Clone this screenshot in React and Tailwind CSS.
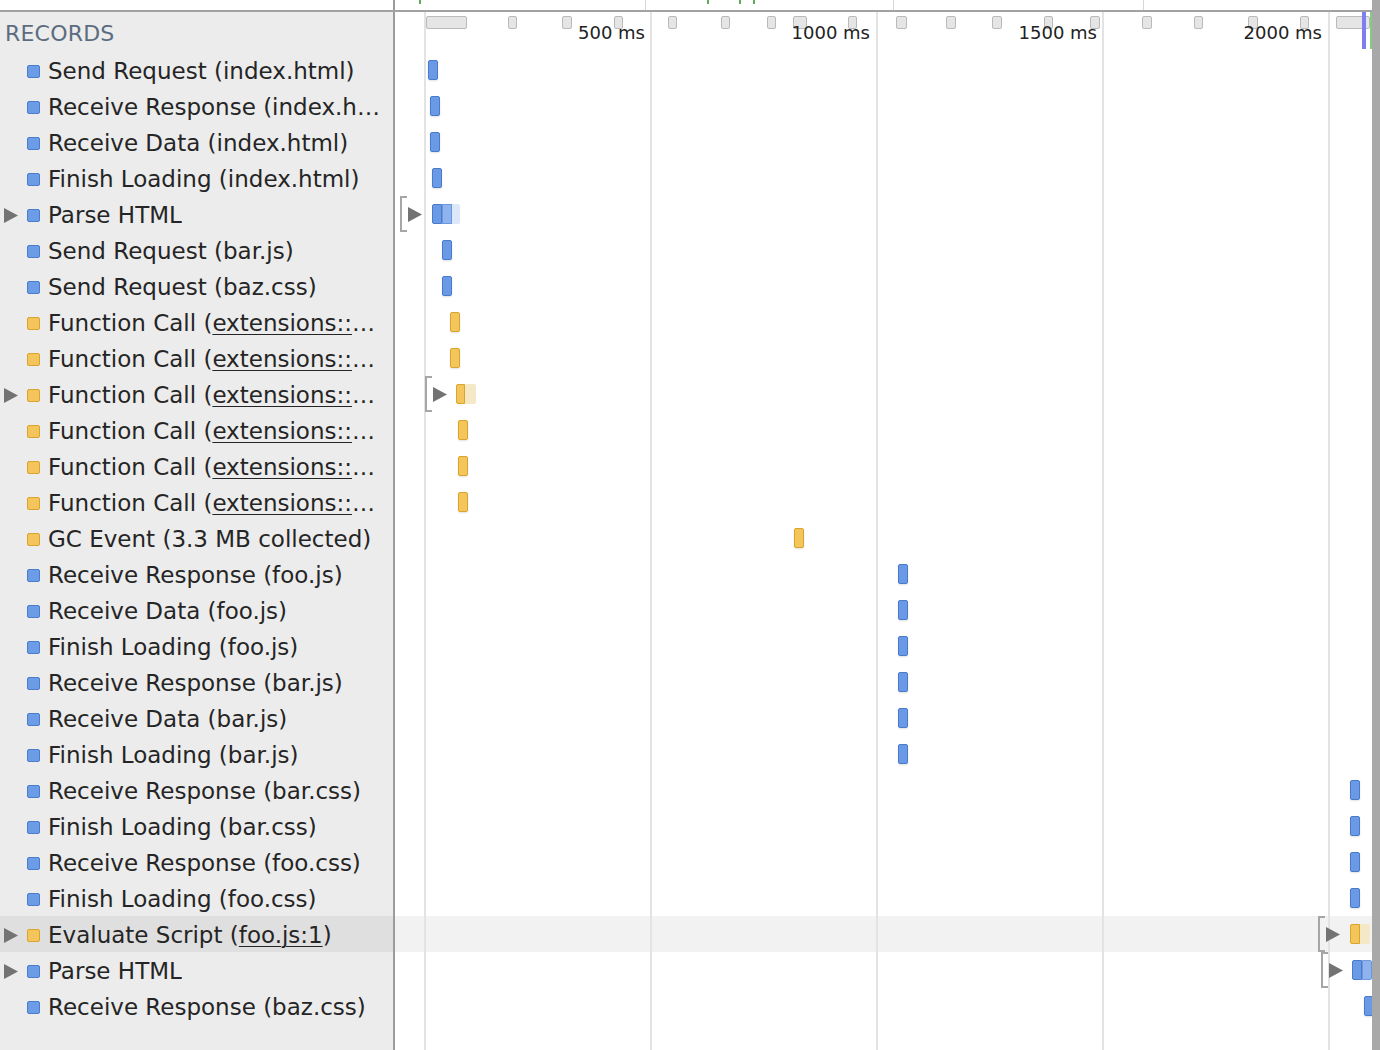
import React from 'react';

const B = 'blue';
const O = 'orange';

const rows = [
  { name: 'Send Request', arg: 'index.html', k: B, x: 428 },
  { name: 'Receive Response', arg: 'index.html', k: B, x: 430 },
  { name: 'Receive Data', arg: 'index.html', k: B, x: 430 },
  { name: 'Finish Loading', arg: 'index.html', k: B, x: 432 },
  { name: 'Parse HTML', k: B, x: 432, expand: 400, parts: [['solid', 10], ['mid', 10], ['pale', 8]] },
  { name: 'Send Request', arg: 'bar.js', k: B, x: 442 },
  { name: 'Send Request', arg: 'baz.css', k: B, x: 442 },
  { name: 'Function Call', link: 'extensions::binding:251', k: O, x: 450 },
  { name: 'Function Call', link: 'extensions::binding:251', k: O, x: 450 },
  { name: 'Function Call', link: 'extensions::event:101', k: O, x: 456, expand: 425, parts: [['solid', 9], ['pale', 11]] },
  { name: 'Function Call', link: 'extensions::utils:26', k: O, x: 458 },
  { name: 'Function Call', link: 'extensions::utils:26', k: O, x: 458 },
  { name: 'Function Call', link: 'extensions::utils:26', k: O, x: 458 },
  { name: 'GC Event', arg: '3.3 MB collected', k: O, x: 794 },
  { name: 'Receive Response', arg: 'foo.js', k: B, x: 898 },
  { name: 'Receive Data', arg: 'foo.js', k: B, x: 898 },
  { name: 'Finish Loading', arg: 'foo.js', k: B, x: 898 },
  { name: 'Receive Response', arg: 'bar.js', k: B, x: 898 },
  { name: 'Receive Data', arg: 'bar.js', k: B, x: 898 },
  { name: 'Finish Loading', arg: 'bar.js', k: B, x: 898 },
  { name: 'Receive Response', arg: 'bar.css', k: B, x: 1350 },
  { name: 'Finish Loading', arg: 'bar.css', k: B, x: 1350 },
  { name: 'Receive Response', arg: 'foo.css', k: B, x: 1350 },
  { name: 'Finish Loading', arg: 'foo.css', k: B, x: 1350 },
  { name: 'Evaluate Script', link: 'foo.js:1', k: O, x: 1350, expand: 1318, parts: [['solid', 10], ['pale', 10]], selected: true },
  { name: 'Parse HTML', k: B, x: 1352, expand: 1321, parts: [['solid', 10], ['mid', 10]] },
  { name: 'Receive Response', arg: 'baz.css', k: B, x: 1364 },
];

// header frame boxes: [left, width] relative to the timeline
const boxes = [
  [31, 41], [113, 9], [167, 10], [219, 9], [273, 9], [326, 9], [372, 9], [398, 14],
  [453, 9], [501, 11], [551, 10], [597, 10], [649, 9], [695, 10], [747, 10], [799, 9],
  [853, 10], [905, 9], [941, 34],
];

const labels = [
  ['500 ms', 'left-[50px]'],
  ['1000 ms', 'left-[275px]'],
  ['1500 ms', 'left-[502px]'],
  ['2000 ms', 'left-[727px]'],
];

const segClass = {
  blue: {
    solid: 'bg-[#6a9ae6] border border-[#4a7bcb]',
    mid: 'bg-[#8fb3ee] border border-[#6b97dc]',
    pale: 'bg-[#dce7f8]',
  },
  orange: {
    solid: 'bg-[#f4c55a] border border-[#d9a52c]',
    mid: 'bg-[#f6d588] border border-[#e0b650]',
    pale: 'bg-[#f5e8c6]',
  },
};

const Square = ({ k }) => (
  <span
    className={`w-[13px] h-[13px] rounded-[2px] shrink-0 border ${
      k === B ? 'bg-[#6c9ce6] border-[#4b7dcc]' : 'bg-[#f4c55a] border-[#d8a42c]'
    }`}
  />
);

const Triangle = () => (
  <svg width="14" height="15" viewBox="0 0 14 15">
    <polygon points="0,0 14,7.5 0,15" fill="#737373" />
  </svg>
);

const Label = ({ row }) => (
  <span className="truncate">
    {row.name}
    {row.arg && ` (${row.arg})`}
    {row.link && (
      <>
        {' ('}
        <span className="underline decoration-1 underline-offset-[3px]">{row.link}</span>
        {')'}
      </>
    )}
  </span>
);

// a record's bar on the time canvas; grouped records get a bracket and a disclosure arrow
const Bar = ({ row }) => {
  const left = row.x - 395;
  if (!row.parts) {
    return (
      <div
        className={`absolute top-[8px] h-[20px] w-[10px] rounded-[2px] z-[2] shadow-[0_1px_2px_rgba(0,0,0,0.12)] ${segClass[row.k].solid}`}
        style={{ left }}
      />
    );
  }
  return (
    <>
      <div className="absolute top-0 h-[36px] flex items-center z-[2]" style={{ left: row.expand - 395 }}>
        <div className="w-[7px] h-full border-l-2 border-y-2 border-[#a6a6a6]" />
        <div className="ml-[1px]">
          <Triangle />
        </div>
      </div>
      <div className="absolute top-[8px] h-[20px] flex z-[2]" style={{ left }}>
        {row.parts.map(([p, w], i) => (
          <div
            key={i}
            className={`h-full ${i === 0 ? 'rounded-l-[2px]' : ''} ${i === row.parts.length - 1 ? 'rounded-r-[2px]' : ''} ${segClass[row.k][p]}`}
            style={{ width: w }}
          />
        ))}
      </div>
    </>
  );
};

export default function App() {
  return (
    <div className="w-[1380px] h-[1050px] flex overflow-hidden bg-white font-['DejaVu_Sans',sans-serif] text-[#252525]">
      <div className="w-[1372px] flex flex-col">
        {/* overview strip */}
        <div className="h-[10px] flex shrink-0">
          <div className="w-[395px] border-r-2 border-[#9c9c9c]" />
          <div className="relative flex-1">
            <div className="absolute left-[24px] top-0 w-[2px] h-[4px] bg-[#5cae5c]" />
            <div className="absolute left-[312px] top-0 w-[2px] h-[4px] bg-[#5cae5c]" />
            <div className="absolute left-[344px] top-0 w-[2px] h-[4px] bg-[#5cae5c]" />
            <div className="absolute left-[358px] top-0 w-[2px] h-[4px] bg-[#5cae5c]" />
            <div className="absolute left-[250px] top-0 w-[1px] h-full bg-[#d6d6d6]" />
            <div className="absolute left-[498px] top-0 w-[1px] h-full bg-[#d6d6d6]" />
            <div className="absolute left-[748px] top-0 w-[1px] h-full bg-[#d6d6d6]" />
          </div>
        </div>
        <div className="h-[2px] bg-[#a2a2a2] shrink-0" />

        <div className="flex-1 flex min-h-0">
          {/* records list */}
          <div className="w-[395px] shrink-0 bg-[#ececec] border-r-2 border-[#9c9c9c] flex flex-col">
            <div className="h-[40px] flex items-center pl-[5px] pt-[2px] text-[22px] text-[#5c6c80] tracking-[0.2px]">
              RECORDS
            </div>
            {rows.map((row, i) => (
              <div
                key={i}
                className={`h-[36px] flex items-center text-[23px] pt-[2px] pr-[6px] ${row.selected ? 'bg-[#dfdfdf]' : ''}`}
              >
                <div className="w-[27px] shrink-0 pl-[4px] flex items-center">
                  {row.expand && <Triangle />}
                </div>
                <Square k={row.k} />
                <div className="ml-[8px] min-w-0 flex-1 flex leading-[34px]">
                  <Label row={row} />
                </div>
              </div>
            ))}
          </div>

          {/* timeline */}
          <div className="relative flex-1 flex flex-col overflow-hidden">
            <div className="absolute inset-y-0 left-[29px] w-[2px] bg-[#e3e3e3] z-[1]" />
            <div className="absolute inset-y-0 left-[255px] w-[2px] bg-[#e3e3e3] z-[1]" />
            <div className="absolute inset-y-0 left-[481px] w-[2px] bg-[#e3e3e3] z-[1]" />
            <div className="absolute inset-y-0 left-[707px] w-[2px] bg-[#e3e3e3] z-[1]" />
            <div className="absolute inset-y-0 left-[933px] w-[2px] bg-[#e3e3e3] z-[1]" />

            <div className="relative h-[40px] shrink-0">
              {boxes.map(([l, w], i) => (
                <div
                  key={i}
                  className="absolute top-[4px] h-[13px] rounded-[2px] bg-[#e5e5e5] border border-[#bababa] z-[2]"
                  style={{ left: l, width: w }}
                />
              ))}
              {labels.map(([t, cls]) => (
                <div
                  key={t}
                  className={`absolute top-[10px] w-[200px] text-right text-[18px] leading-[22px] text-[#222] z-[3] ${cls}`}
                >
                  {t}
                </div>
              ))}
              <div className="absolute left-[967px] top-0 w-[4px] h-[37px] bg-[#7e7ef2] z-[3]" />
              <div className="absolute left-[975px] top-0 w-[2px] h-[37px] bg-[#86c886] z-[3]" />
            </div>

            {rows.map((row, i) => (
              <div key={i} className={`relative h-[36px] shrink-0 ${row.selected ? 'bg-[#f2f2f2]' : ''}`}>
                <Bar row={row} />
              </div>
            ))}
          </div>
        </div>
      </div>
      <div className="w-[8px] bg-[#a8a8a8]" />
    </div>
  );
}
